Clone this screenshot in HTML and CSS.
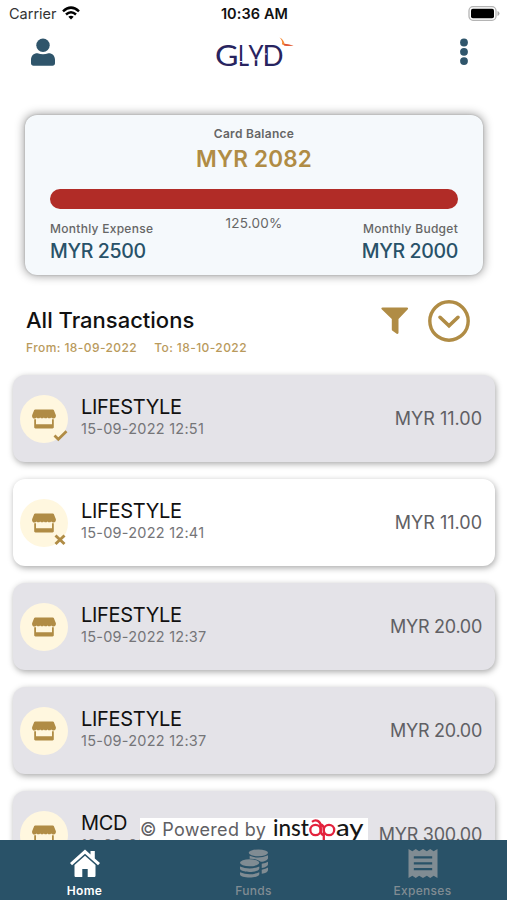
FILE: index.html
```html
<!DOCTYPE html>
<html lang="en">
<head>
<meta charset="utf-8">
<title>GLYD</title>
<link rel="stylesheet" href="styles.css">
</head>
<body>
<svg width="0" height="0" class="defs">
  <symbol id="store" viewBox="0 0 24 20">
    <path d="M3.200.5h17.600c.5 0 .8.2 1 .6l2 4.800c.5 1.800-.5 3.600-2.300 3.600-1 0-1.800-.4-2.300-1.100-.9 1.100-2.800 1.200-3.700 0-.9 1.100-2.800 1.200-3.600 0-.9 1.100-2.800 1.200-3.700 0-.9 1.100-2.800 1.200-3.600 0-.7.8-1.400 1.100-2.300 1.100C.6 9.500-.3 7.700.2 5.900l2-4.800c.2-.4.500-.6 1-.6z"/>
    <path d="M2.200 10.300h1.800v4.900h16v-4.900h1.800v8c0 .7-.5 1.200-1.200 1.200H3.400c-.7 0-1.200-.5-1.200-1.200z"/>
  </symbol>
</svg>
<div class="app">
  <div class="status">
    <div class="carrier"><span>Carrier</span>
      <svg class="wifi" viewBox="0 0 18 14" fill="none" stroke="#000" stroke-width="2.500"><path d="M1 5.300Q9-2 17 5.300M4 8.500Q9 4 14 8.500"/><path d="M6.300 10.800Q9 8.500 11.700 10.800L9 13.600z" fill="#000" stroke="none"/></svg>
    </div>
    <div class="time">10:36 AM</div>
    <svg class="battery" viewBox="0 0 32 15"><rect x="1" y=".7" width="27" height="13.600" rx="4" fill="#fff" stroke="#b4b4b4" stroke-width="1.300"/><rect x="3" y="2.700" width="23" height="9.600" rx="1.800"/><path d="M29.500 5q2 .6 2 2.500t-2 2.500z" fill="#aaa"/></svg>
  </div>
  <header class="header">
    <svg class="user" viewBox="0 0 24 28" fill="#2f556b"><circle cx="12" cy="7.200" r="6.700"/><path d="M6.500 15.200q5.500 2.200 11 0c4 0 6.500 2.700 6.500 6.500v3.500c0 1.500-1 2.500-2.500 2.500h-19C1 27.700 0 26.700 0 25.200v-3.500c0-3.800 2.500-6.500 6.500-6.500z"/></svg>
    <svg class="logo" viewBox="0 0 80 34">
      <g fill="#28245f" class="wordmark">
        <text x="-1" y="29" textLength="23.500" lengthAdjust="spacingAndGlyphs">G</text>
        <text x="22" y="29" textLength="11" lengthAdjust="spacingAndGlyphs">L</text>
        <text x="32.500" y="29" textLength="15" lengthAdjust="spacingAndGlyphs">Y</text>
        <text x="46.500" y="29" textLength="21" lengthAdjust="spacingAndGlyphs">D</text>
      </g>
      <path d="M22.500 24.500h4M38 22.800h5M46 17h5" stroke="#fff" stroke-width="1"/>
      <path d="M63.500.5C67 2 68.200 4.700 68.500 6.800L77.500 8.600Q69.500 10 65.900 7.200C66.800 5 65.500 2.500 63.500.5z" fill="#f58a35"/>
      <path d="M68.500 6.800l9 1.800Q71 9 68 8.200z" fill="#d94b3d"/>
    </svg>
    <svg class="dots" viewBox="0 0 8 28" fill="#2f556b"><circle cx="4" cy="4.500" r="3.900"/><circle cx="4" cy="13.800" r="3.900"/><circle cx="4" cy="23.100" r="3.900"/></svg>
  </header>
  <section class="balance">
    <div class="label strong">Card Balance</div>
    <div class="total">MYR 2082</div>
    <div class="bar"></div>
    <div class="stats">
      <div><div class="label">Monthly Expense</div><div class="amount">MYR 2500</div></div>
      <div class="percent">125.00%</div>
      <div class="right"><div class="label">Monthly Budget</div><div class="amount">MYR 2000</div></div>
    </div>
  </section>
  <section class="heading">
    <div class="titles"><h1>All Transactions</h1><div class="dates"><span>From: 18-09-2022</span><span>To: 18-10-2022</span></div></div>
    <svg class="filter" viewBox="0 0 28 28" fill="#b08c45"><path d="M1.500.5h24.500c1 0 1.400 1 .8 1.800L17.500 12v13.700c0 1-1 1.500-1.800 1l-4.200-2.900c-.5-.3-.7-.7-.7-1.200V12L.7 2.300C0 1.500.5.500 1.500.5z"/></svg>
    <svg class="expand" viewBox="0 0 42 42" fill="none" stroke="#b08c45"><circle cx="21" cy="21" r="19.200" stroke-width="3.400"/><path d="M12 17.300l9 8.500 9-8.500" stroke-width="3.600" stroke-linecap="round"/></svg>
  </section>
  <main class="list">
    <article class="row grey">
      <div class="icon"><svg class="store"><use href="#store"/></svg><svg class="mark" viewBox="0 0 15 15"><path d="M1.500 7.500l3.800 3.800 8.200-8" fill="none" stroke="#b08c45" stroke-width="2.700"/></svg></div>
      <div class="info"><div class="name">LIFESTYLE</div><div class="when">15-09-2022 12:51</div></div><div class="price">MYR 11.00</div>
    </article>
    <article class="row">
      <div class="icon"><svg class="store"><use href="#store"/></svg><svg class="mark" viewBox="0 0 15 15"><path d="M2.500 3.500l9 8.500m0-8.500l-9 8.500" fill="none" stroke="#b08c45" stroke-width="2.900"/></svg></div>
      <div class="info"><div class="name">LIFESTYLE</div><div class="when">15-09-2022 12:41</div></div><div class="price">MYR 11.00</div>
    </article>
    <article class="row grey">
      <div class="icon"><svg class="store"><use href="#store"/></svg></div>
      <div class="info"><div class="name">LIFESTYLE</div><div class="when">15-09-2022 12:37</div></div><div class="price tight">MYR 20.00</div>
    </article>
    <article class="row grey">
      <div class="icon"><svg class="store"><use href="#store"/></svg></div>
      <div class="info"><div class="name">LIFESTYLE</div><div class="when">15-09-2022 12:37</div></div><div class="price tight">MYR 20.00</div>
    </article>
    <article class="row grey">
      <div class="icon"><svg class="store"><use href="#store"/></svg></div>
      <div class="info"><div class="name">MCD</div><div class="when">12-09-2022 12:37</div></div><div class="price tight">MYR 300.00</div>
    </article>
    <div class="powered"><span class="by">© Powered by</span>
      <svg class="insta" viewBox="0 0 95 22">
        <text x="0" y="17.500" textLength="36" lengthAdjust="spacingAndGlyphs">inst</text>
        <text x="63" y="17.500" textLength="27.500" lengthAdjust="spacingAndGlyphs">ay</text>
        <g fill="none" stroke="#e3213c" stroke-width="2.300">
          <circle cx="42.500" cy="12" r="5.200"/><circle cx="56" cy="12" r="5.200"/>
          <path d="M39 3.800C43 .8 47.300 3 47.700 7.500V12q0 5 3 5M50.800 22V12q0-5-3-5.500"/>
        </g>
      </svg>
    </div>
  </main>
  <nav class="tabs">
    <a class="tab active">
      <svg viewBox="0 0 30 28" fill="#fff"><path d="M15 0l5.500 5V1.500h4.300v7.400L30 13.500l-2 2.300L15 4.300 2 15.800 0 13.500z"/><path d="M15 6.300l10.500 9.300v10.600c0 .8-.6 1.300-1.300 1.300h-6.500v-8h-5.400v8H5.800c-.7 0-1.300-.5-1.300-1.300V15.600z"/></svg>
      <span>Home</span></a>
    <a class="tab">
      <svg viewBox="0 0 30 30" fill="#808c93"><ellipse cx="19.500" cy="4" rx="10" ry="3.500"/><path d="M10.500 7q9 4 19-.5v2.700c0 2-3 3.600-7.500 4.100-2-2-6-3.500-11.500-3.300zM23 15.300q4-.5 6.500-2v2.500c0 1.800-2.500 3.200-6.500 3.900zM23 21.400q4-.6 6.500-2.200v2.400c0 2-2.500 3.300-6.500 4z"/><ellipse cx="10.500" cy="14.300" rx="10" ry="3.600"/><path d="M.5 18q10 4.300 20 0v2.300c0 4.600-20 4.600-20 0zM.5 24q10 4.300 20 0v2.200c0 4.400-20 4.400-20 0z"/></svg>
      <span>Funds</span></a>
    <a class="tab">
      <svg viewBox="0 0 30 30" fill="#808c93"><path d="M0 0l4 2.300L7.500 0 11 2.300 15 0l4 2.300L22.500 0 26 2.300 30 0v30l-4-2.300-3.500 2.300-3.500-2.300-4 2.300-4-2.300L7.500 30 4 27.700 0 30z"/><path d="M5.500 8.700h19m-19 6.100h19m-19 6.100h19" stroke="#295268" stroke-width="2.300"/></svg>
      <span>Expenses</span></a>
  </nav>
</div>
</body>
</html>
```
FILE: styles.css
```css
* { box-sizing: border-box; }
body { margin: 0; background: #fff; font-family: Inter, sans-serif; color: #111; }
svg { display: block; flex: none; }
.defs { position: absolute; }
.app { width: 507px; height: 900px; display: flex; flex-direction: column; overflow: hidden; }
.status { height: 28px; flex: none; display: grid; grid-template-columns: 1fr auto 1fr; align-items: center; padding: 0 7px 0 9px; }
.carrier { display: flex; gap: 6px; align-items: center; font-size: 14.500px; color: #333; margin-top: -1px; }
.wifi { width: 18px; height: 14px; margin-top: -2px; margin-left: -1px; }
.time { font-size: 14.500px; font-weight: 600; letter-spacing: .1px; margin-top: -1px; }
.battery { width: 32px; height: 15px; justify-self: end; margin-top: -2px; }
.header { height: 87px; flex: none; display: flex; justify-content: space-between; align-items: flex-start; padding: 10px 39px 0 31px; }
.user { width: 24px; height: 28px; }
.logo { width: 80px; height: 34px; margin: -1px 0 0 -3px; }
.wordmark { font-family: Lato, sans-serif; font-size: 28px; }
.dots { width: 8px; height: 28px; }
.balance { height: 160px; flex: none; margin: 0 24px 0 25px; padding: 11px 25px 0; background: #f5f9fc; border-radius: 12px; box-shadow: 0 0 10px 1px rgba(0,0,0,.38), 0 0 2px rgba(0,0,0,.2); text-align: center; }
.label { font-size: 12px; line-height: 17px; font-weight: 500; letter-spacing: .28px; color: #666; }
.strong { font-weight: 600; line-height: 16px; }
.total { font-size: 22.500px; line-height: 33px; font-weight: 600; letter-spacing: .2px; color: #b08c45; }
.bar { height: 20px; margin-top: 14px; border-radius: 10px; background: #b12c27; }
.stats { display: grid; grid-template-columns: 1fr auto 1fr; text-align: left; padding-top: 11px; }
.stats .right { text-align: right; }
.percent { font-size: 13.500px; line-height: 18px; margin-top: -6px; color: #666; letter-spacing: .2px; }
.amount { font-size: 19.500px; line-height: 29px; font-weight: 500; letter-spacing: -.35px; color: #285269; }
.heading { height: 100px; flex: none; display: flex; align-items: flex-start; padding: 25px 37px 0 26px; }
.titles { flex: 1; }
h1 { margin: 0; font-size: 22px; line-height: 40px; font-weight: 500; }
.dates { display: flex; gap: 17px; font-size: 12px; line-height: 15px; font-weight: 500; letter-spacing: .42px; color: #b99a5c; white-space: nowrap; }
.filter { width: 28px; height: 28px; margin: 7px 19px 0 0; }
.expand { width: 42px; height: 42px; }
.list { flex: 1; min-height: 0; position: relative; display: flex; flex-direction: column; gap: 17px; margin-top: -10px; padding: 10px 12px 0 13px; overflow: hidden; }
.row { height: 87px; flex: none; display: flex; align-items: center; padding: 0 13px 0 7px; background: #fff; border-radius: 12px; box-shadow: 1px 2px 6px rgba(0,0,0,.34); }
.grey { background: #e4e3e8; }
.icon { width: 48px; height: 48px; margin-top: 1px; border-radius: 50%; background: #fff7df; display: grid; place-items: center; position: relative; }
.store { width: 24px; height: 20px; fill: #b08c45; }
.mark { position: absolute; left: 33px; top: 33px; width: 15px; height: 15px; }
.info { margin: -3px auto 0 13px; }
.name { font-size: 20px; line-height: 23px; letter-spacing: -.3px; }
.when { font-size: 14.500px; line-height: 19px; color: #757578; letter-spacing: .25px; }
.price { font-size: 18px; color: #606064; }
.tight { letter-spacing: -.28px; }
.powered { position: absolute; left: 140px; bottom: 0; width: 228px; height: 22px; background: #fff; display: flex; align-items: center; white-space: nowrap; overflow: hidden; }
.by { width: 133px; font-size: 18px; letter-spacing: .33px; color: #606064; }
.insta { width: 95px; height: 22px; font-family: Lato, sans-serif; font-size: 23px; font-weight: 500; fill: #161616; }
.tabs { height: 60px; flex: none; display: grid; grid-template-columns: repeat(3, 1fr); background: #295268; position: relative; }
.tab { display: flex; flex-direction: column; align-items: center; padding-top: 9px; font-size: 12px; line-height: 16px; font-weight: 500; letter-spacing: .3px; color: #808c93; }
.tab svg { width: 30px; height: 29px; margin-bottom: 5px; }
.active { color: #fff; font-weight: 600; }
```
